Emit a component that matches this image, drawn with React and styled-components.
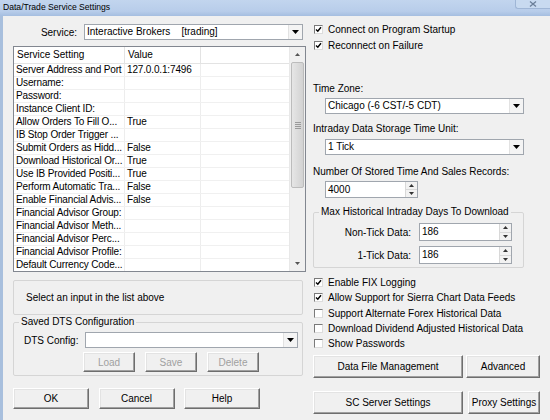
import styled, { createGlobalStyle } from 'styled-components';

const GlobalStyle = createGlobalStyle`
  html, body {
    margin: 0;
    padding: 0;
    background: #f0f0f0;
  }
  body {
    font-family: "Liberation Sans", Arial, sans-serif;
    font-size: 10px;
    color: #000;
  }
  * {
    box-sizing: border-box;
  }
`;

const settings = [
  ['Server Address and Port', '127.0.0.1:7496'],
  ['Username:', ''],
  ['Password:', ''],
  ['Instance Client ID:', ''],
  ['Allow Orders To Fill O...', 'True'],
  ['IB Stop Order Trigger ...', ''],
  ['Submit Orders as Hidd...', 'False'],
  ['Download Historical Or...', 'True'],
  ['Use IB Provided Positi...', 'True'],
  ['Perform Automatic Tra...', 'False'],
  ['Enable Financial Advis...', 'False'],
  ['Financial Advisor Group:', ''],
  ['Financial Advisor Meth...', ''],
  ['Financial Advisor Perc...', ''],
  ['Financial Advisor Profile:', ''],
  ['Default Currency Code...', ''],
];

const options = [
  ['Enable FIX Logging', true],
  ['Allow Support for Sierra Chart Data Feeds', true],
  ['Support Alternate Forex Historical Data', false],
  ['Download Dividend Adjusted Historical Data', false],
  ['Show Passwords', false],
];

const DownArrow = () => (
  <svg width="7" height="4" viewBox="0 0 7 4">
    <path d="M0 0 H7 L3.5 4 Z" fill="#000" />
  </svg>
);

const Combo = ({ value, width }) => (
  <ComboBox $width={width}>
    <ComboText>{value}</ComboText>
    <DropButton>
      <DownArrow />
    </DropButton>
  </ComboBox>
);

const Spin = ({ value, width, height }) => (
  <SpinBox $width={width} $height={height}>
    <ComboText>{value}</ComboText>
    <SpinButtons>
      <SpinHalf>
        <svg width="5" height="3" viewBox="0 0 5 3">
          <path d="M0 3 H5 L2.5 0 Z" fill="#333" />
        </svg>
      </SpinHalf>
      <SpinHalf>
        <svg width="5" height="3" viewBox="0 0 5 3">
          <path d="M0 0 H5 L2.5 3 Z" fill="#333" />
        </svg>
      </SpinHalf>
    </SpinButtons>
  </SpinBox>
);

const Check = ({ label, checked, height }) => (
  <CheckRow $height={height}>
    <CheckBox>
      {checked && (
        <svg width="7" height="7" viewBox="0 0 7 7">
          <path d="M1 3.5 L2.8 5.3 L6 1.2" stroke="#000" strokeWidth="1.4" fill="none" />
        </svg>
      )}
    </CheckBox>
    {label}
  </CheckRow>
);

export default function App() {
  return (
    <>
      <GlobalStyle />
      <Window>
        <TitleBar>
          <Title>Data/Trade Service Settings</Title>
          <CloseButton>
            <svg width="8" height="6" viewBox="0 0 8 6">
              <path d="M1 0.5 L7 5.5 M7 0.5 L1 5.5" stroke="#6b7f99" strokeWidth="1.3" />
            </svg>
          </CloseButton>
        </TitleBar>

        <Body>
          <LeftColumn>
            <ServiceRow>
              <ServiceLabel>Service:</ServiceLabel>
              <Combo width={219} value="Interactive Brokers    [trading]" />
            </ServiceRow>

            <ListBox>
              <Grid>
                <HeaderRow>
                  <HeaderCell $width={111}>Service Setting</HeaderCell>
                  <HeaderCell $width={76}>Value</HeaderCell>
                  <HeaderCell />
                </HeaderRow>
                {settings.map(([name, value]) => (
                  <Row key={name}>
                    <Cell $width={111}>{name}</Cell>
                    <Cell $width={76}>{value}</Cell>
                    <Cell />
                  </Row>
                ))}
              </Grid>
              <ScrollBar>
                <ScrollArrow>
                  <svg width="5" height="3" viewBox="0 0 5 3">
                    <path d="M0 3 H5 L2.5 0 Z" fill="#555" />
                  </svg>
                </ScrollArrow>
                <ScrollTrack>
                  <Thumb>
                    <Grip />
                  </Thumb>
                </ScrollTrack>
                <ScrollArrow>
                  <svg width="5" height="3" viewBox="0 0 5 3">
                    <path d="M0 0 H5 L2.5 3 Z" fill="#555" />
                  </svg>
                </ScrollArrow>
              </ScrollBar>
            </ListBox>

            <InfoBox>Select an input in the list above</InfoBox>

            <GroupBox $margin={1}>
              <Legend>Saved DTS Configuration</Legend>
              <DtsRow>
                <DtsLabel>DTS Config:</DtsLabel>
                <Combo width={213} value="" />
              </DtsRow>
              <DtsButtons>
                <Button $width={52} $height={20} disabled>Load</Button>
                <Button $width={52} $height={20} disabled>Save</Button>
                <Button $width={52} $height={20} disabled>Delete</Button>
              </DtsButtons>
            </GroupBox>

            <DialogButtons>
              <Button $width={76} $height={21}>OK</Button>
              <Button $width={76} $height={21}>Cancel</Button>
              <Button $width={76} $height={21}>Help</Button>
            </DialogButtons>
          </LeftColumn>

          <RightColumn>
            <Check label="Connect on Program Startup" checked height={16} />
            <Check label="Reconnect on Failure" checked height={16} />

            <FieldLabel $margin={29}>Time Zone:</FieldLabel>
            <Indent $margin={3}>
              <Combo width={199} value="Chicago (-6 CST/-5 CDT)" />
            </Indent>

            <FieldLabel $margin={8}>Intraday Data Storage Time Unit:</FieldLabel>
            <Indent $margin={4}>
              <Combo width={199} value="1 Tick" />
            </Indent>

            <FieldLabel $margin={10}>Number Of Stored Time And Sales Records:</FieldLabel>
            <Indent $margin={3}>
              <Spin width={93} height={17} value="4000" />
            </Indent>

            <GroupBox $margin={8} $width={211}>
              <Legend>Max Historical Intraday Days To Download</Legend>
              <DaysRow $margin={5}>
                <DaysLabel>Non-Tick Data:</DaysLabel>
                <Spin width={93} height={18} value="186" />
              </DaysRow>
              <DaysRow $margin={5}>
                <DaysLabel>1-Tick Data:</DaysLabel>
                <Spin width={93} height={18} value="186" />
              </DaysRow>
            </GroupBox>

            <Options>
              {options.map(([label, checked]) => (
                <Check key={label} label={label} checked={checked} height={15.3} />
              ))}
            </Options>

            <ButtonRow $margin={4} $gap={3}>
              <Button $width={150} $height={23}>Data File Management</Button>
              <Button $width={74} $height={23}>Advanced</Button>
            </ButtonRow>
            <ButtonRow $margin={13} $gap={5}>
              <Button $width={150} $height={23}>SC Server Settings</Button>
              <Button $width={72} $height={23}>Proxy Settings</Button>
            </ButtonRow>
          </RightColumn>
        </Body>
      </Window>
    </>
  );
}

const Window = styled.div`
  display: flex;
  flex-direction: column;
  width: 550px;
  height: 420px;
  overflow: hidden;
  background: #f0f0f0;
`;

const TitleBar = styled.div`
  display: flex;
  justify-content: space-between;
  align-items: flex-start;
  height: 16px;
  flex-shrink: 0;
  background: linear-gradient(#c2d5ee, #b8cdea 70%, #a5bee0);
`;

const Title = styled.span`
  padding: 2px 0 0 3px;
  font-size: 8.6px;
  line-height: 11px;
  color: #000;
`;

const CloseButton = styled.div`
  display: flex;
  align-items: center;
  justify-content: center;
  width: 35px;
  height: 9px;
  background: #c8daf0;
  border-left: 1px solid #9fb6d6;
  border-bottom: 1px solid #9fb6d6;
  border-bottom-left-radius: 3px;
`;

const Body = styled.div`
  display: flex;
  flex: 1;
  gap: 7px;
  padding: 8px 10px 0 10px;
  border-left: 3px solid #a8bfdd;
`;

const LeftColumn = styled.div`
  display: flex;
  flex-direction: column;
  width: 293px;
`;

const RightColumn = styled.div`
  display: flex;
  flex-direction: column;
  width: 227px;
  margin-top: -3px;
`;

const ServiceRow = styled.div`
  display: flex;
  align-items: center;
  height: 16px;
`;

const ServiceLabel = styled.span`
  width: 71px;
  padding-right: 7px;
  text-align: right;
`;

const ComboBox = styled.div`
  display: flex;
  align-items: center;
  width: ${(p) => p.$width}px;
  height: 16px;
  background: #fff;
  border: 1px solid #a0a6ae;
`;

const ComboText = styled.span`
  flex: 1;
  padding-left: 2px;
  white-space: pre;
  overflow: hidden;
  line-height: 14px;
`;

const DropButton = styled.div`
  display: flex;
  align-items: center;
  justify-content: center;
  width: 14px;
  height: 100%;
  background: #f4f4f4;
  border-left: 1px solid #e2e2e2;
`;

const SpinBox = styled.div`
  display: flex;
  align-items: stretch;
  width: ${(p) => p.$width}px;
  height: ${(p) => p.$height}px;
  background: #fff;
  border: 1px solid #a0a6ae;

  & > span {
    align-self: center;
  }
`;

const SpinButtons = styled.div`
  display: flex;
  flex-direction: column;
  width: 12px;
  border-left: 1px solid #d8d8d8;
`;

const SpinHalf = styled.div`
  display: flex;
  flex: 1;
  align-items: center;
  justify-content: center;
  background: #f2f2f2;

  & + & {
    border-top: 1px solid #d8d8d8;
  }
`;

const ListBox = styled.div`
  display: flex;
  width: 293px;
  height: 226px;
  margin-top: 6px;
  background: #fff;
  border: 1px solid #828790;
  overflow: hidden;
`;

const Grid = styled.div`
  display: flex;
  flex-direction: column;
  flex: 1;
`;

const HeaderRow = styled.div`
  display: flex;
  height: 17px;
  border-bottom: 1px solid #e3e3e3;
`;

const HeaderCell = styled.div`
  width: ${(p) => (p.$width ? `${p.$width}px` : 'auto')};
  flex: ${(p) => (p.$width ? 'none' : '1')};
  padding-left: 3px;
  line-height: 16px;
  border-right: 1px solid #e3e3e3;
  white-space: nowrap;
  overflow: hidden;

  &:last-child {
    border-right: none;
  }
`;

const Row = styled.div`
  display: flex;
  height: 13px;
  border-bottom: 1px solid #f0f0f0;
`;

const Cell = styled.div`
  width: ${(p) => (p.$width ? `${p.$width}px` : 'auto')};
  flex: ${(p) => (p.$width ? 'none' : '1')};
  padding-left: 2px;
  line-height: 12px;
  letter-spacing: -0.15px;
  border-right: 1px solid #ededed;
  white-space: nowrap;
  overflow: hidden;

  &:last-child {
    border-right: none;
  }
`;

const ScrollBar = styled.div`
  display: flex;
  flex-direction: column;
  width: 16px;
  background: #f0f0f0;
  border-left: 1px solid #e8e8e8;
`;

const ScrollArrow = styled.div`
  display: flex;
  align-items: center;
  justify-content: center;
  height: 15px;
`;

const ScrollTrack = styled.div`
  flex: 1;
  padding: 0 1px;
`;

const Thumb = styled.div`
  display: flex;
  align-items: center;
  justify-content: center;
  height: 126px;
  background: linear-gradient(90deg, #e6e6e6, #d2d2d2);
  border: 1px solid #bcbcbc;
  border-radius: 2px;
`;

const Grip = styled.div`
  width: 6px;
  height: 7px;
  background: repeating-linear-gradient(#9a9a9a 0 1px, transparent 1px 2px);
`;

const InfoBox = styled.div`
  display: flex;
  align-items: center;
  width: 290px;
  height: 35px;
  margin-top: 8px;
  padding-left: 12px;
  border: 1px solid #d5d5d5;
  border-radius: 2px;
`;

const GroupBox = styled.fieldset`
  display: flex;
  flex-direction: column;
  width: ${(p) => p.$width || 290}px;
  margin: ${(p) => p.$margin}px 0 0 0;
  padding: 0 0 3px 0;
  border: 1px solid #d5d5d5;
  border-radius: 2px;
  min-inline-size: 0;
`;

const Legend = styled.legend`
  margin-left: 5px;
  padding: 0 2px;
  line-height: 12px;
`;

const DtsRow = styled.div`
  display: flex;
  align-items: center;
  margin-top: 4px;
  padding-left: 10px;
`;

const DtsLabel = styled.span`
  width: 61px;
`;

const DtsButtons = styled.div`
  display: flex;
  gap: 10px;
  margin-top: 4px;
  padding-left: 69px;
`;

const Button = styled.button`
  display: flex;
  align-items: center;
  justify-content: center;
  width: ${(p) => p.$width}px;
  height: ${(p) => p.$height}px;
  padding: 0;
  font-family: "Liberation Sans", Arial, sans-serif;
  font-size: 10px;
  color: #000;
  background: #f0f0f0;
  border: 1px solid;
  border-color: #ffffff #6e6e6e #6e6e6e #ffffff;
  box-shadow: inset -1px -1px 0 #a0a0a0, inset 1px 1px 0 #e3e3e3;
  border-radius: 0;

  &:disabled {
    color: #a0a0a0;
  }
`;

const DialogButtons = styled.div`
  display: flex;
  gap: 9.5px;
  margin-top: 12px;
`;

const CheckRow = styled.div`
  display: flex;
  align-items: center;
  height: ${(p) => p.$height}px;
  white-space: nowrap;
`;

const CheckBox = styled.span`
  display: flex;
  align-items: center;
  justify-content: center;
  width: 9px;
  height: 9px;
  margin: 0 5px 0 1px;
  background: #fff;
  border: 1px solid;
  border-color: #7a7a7a #dcdcdc #dcdcdc #7a7a7a;
`;

const FieldLabel = styled.div`
  margin-top: ${(p) => p.$margin}px;
  line-height: 13px;
`;

const Indent = styled.div`
  margin-top: ${(p) => p.$margin}px;
  padding-left: 12px;
`;

const DaysRow = styled.div`
  display: flex;
  align-items: center;
  margin-top: ${(p) => p.$margin}px;
`;

const DaysLabel = styled.span`
  width: 97px;
  margin-right: 8px;
  text-align: right;
`;

const Options = styled.div`
  display: flex;
  flex-direction: column;
  margin-top: 7px;
`;

const ButtonRow = styled.div`
  display: flex;
  gap: ${(p) => p.$gap}px;
  margin-top: ${(p) => p.$margin}px;
`;
